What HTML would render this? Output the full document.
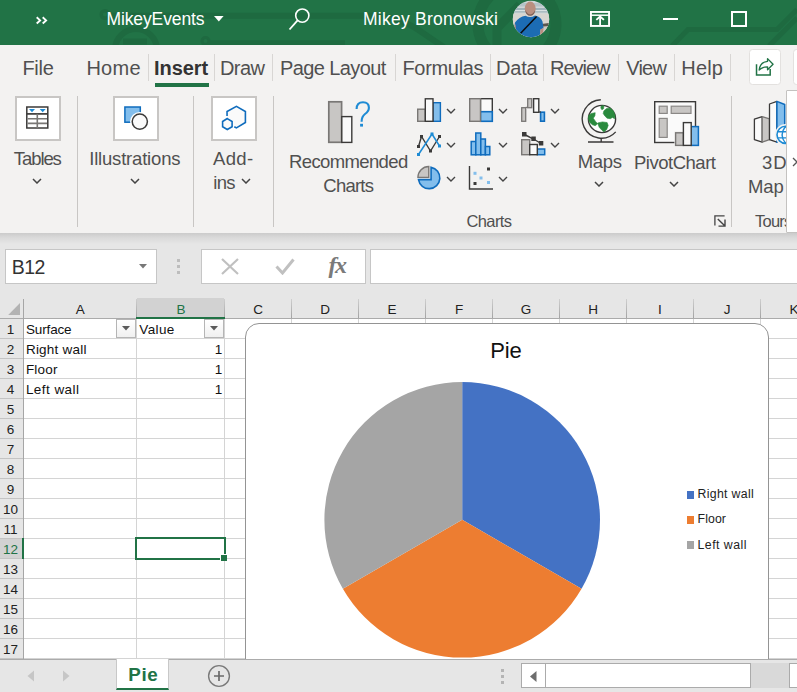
<!DOCTYPE html>
<html lang="en"><head><meta charset="utf-8"><title>MikeyEvents - Excel</title>
<style>
html,body{margin:0;padding:0;background:#fff;}
body{width:797px;height:692px;overflow:hidden;font-family:"Liberation Sans",sans-serif;}
#app{position:relative;width:797px;height:692px;overflow:hidden;background:#e6e6e6;}
#app div,#app svg{position:absolute;box-sizing:border-box;}
.t{white-space:pre;line-height:normal;}
#titlebar{left:0;top:0;width:797px;height:45px;background:#217346;overflow:hidden;}
#tabs{left:0;top:45px;width:797px;height:45px;background:#f3f2f1;}
#ribbon{left:0;top:90px;width:797px;height:143px;background:#f3f2f1;}
#shadow{left:0;top:233px;width:797px;height:11px;background:linear-gradient(#cbcbcb,#d9d9d9 40%,#e6e6e6);}
.sep{width:1px;background:#c8c6c4;}
.tsep{width:1px;top:54px;height:27px;background:#d8d6d4;}
.bigbtn{top:96px;width:46px;height:45px;background:#fff;border:2px solid #c8c6c4;}
.fbox{top:249px;height:35px;background:#fff;border:1px solid #c6c6c6;}
#grid{left:0;top:298px;width:797px;height:361px;background:#fff;overflow:hidden;}
#gridin{left:0;top:1px;width:797px;height:360px;}
.hl{left:0;width:797px;height:1px;background:#d4d4d4;}
.vl{top:0;width:1px;height:360px;background:#d4d4d4;}
#colhdr{left:0;top:-1px;width:797px;height:21px;background:#e6e6e6;border-bottom:1px solid #ababab;}
#rowhdr{left:0;top:20px;width:24px;height:340px;background:#e6e6e6;border-right:1px solid #a6a6a6;}
.rl{left:0;width:23px;height:1px;background:#c4c4c4;}
.cl{top:0;width:1px;height:19px;background:linear-gradient(#cfcfcf,#a3a3a3);}
.filt{width:20px;height:19px;background:linear-gradient(#fff,#f0f0f0);border:1px solid #b5b5b5;}
#chart{left:245px;top:24px;width:524px;height:400px;background:#fff;border:1px solid #949494;border-radius:14px;}
#tabbar{left:0;top:659px;width:797px;height:33px;background:#e6e6e6;}
#sheettab{left:116px;top:0;width:53px;height:31px;background:#fff;border-left:1px solid #c8c8c8;border-right:1px solid #c8c8c8;border-bottom:2px solid #217346;}

</style></head>
<body>
<div id="app">
<!-- ===== Title bar ===== -->
<div id="titlebar">
  <svg width="797" height="45" viewBox="0 0 797 45" style="left:0;top:0">
    <g fill="none" stroke="#1e6a40" stroke-width="4.5">
      <circle cx="105" cy="14.5" r="3.8" stroke-width="3.4"/>
      <path d="M108 15.8 H372 Q400 17 420 31 L445 48" stroke-width="6"/>
      <circle cx="136" cy="50" r="21" stroke-width="6"/>
      <path d="M123 41.5 H147" stroke-width="6"/>
      <circle cx="205.5" cy="41" r="3.5" stroke-width="3"/>
      <path d="M209 43 H345" stroke-width="5.5"/>
      <circle cx="517" cy="24" r="39" stroke-width="11"/>
      <path d="M497 45 L497 28 L520 5" stroke-width="9"/>
      <path d="M672 46 L688 29.5 H777 L797 9.5" stroke-width="5"/>
      <path d="M769 46 L797 18" stroke-width="5"/>
    </g>
  </svg>
  <!-- more chevrons -->
  <svg width="14" height="10" viewBox="0 0 14 10" style="left:35px;top:15px"><path d="M1.7 2.3 L5.1 5.4 L1.7 8.5 M7.7 2.3 L11.1 5.4 L7.7 8.5" fill="none" stroke="#fff" stroke-width="1.9"/></svg>
  <!-- dropdown -->
  <svg width="10" height="6" viewBox="0 0 10 6" style="left:214.2px;top:15.6px"><path d="M0 0 H9.6 L4.8 5.4 Z" fill="#fff"/></svg>
  <!-- search -->
  <svg width="24" height="26" viewBox="0 0 24 26" style="left:288px;top:6px"><circle cx="14.3" cy="9.6" r="6.6" fill="none" stroke="#fff" stroke-width="1.6"/><path d="M9.6 14.4 L1.5 23.5" stroke="#fff" stroke-width="1.8" fill="none"/></svg>
  <!-- avatar -->
  <svg width="38" height="38" viewBox="0 0 38 38" style="left:512px;top:0">
    <defs><clipPath id="av"><circle cx="19" cy="19" r="18.2"/></clipPath></defs>
    <g clip-path="url(#av)">
      <rect width="38" height="38" fill="#cfd6d8"/>
      <rect y="3" width="38" height="3.5" fill="#b4c3c8"/>
      <rect y="8" width="38" height="4.5" fill="#9fb3ba"/>
      <rect y="10" width="38" height="1.2" fill="#d9e0e2"/>
      <rect y="13.5" width="38" height="10" fill="#d8d5d0"/>
      <rect y="23" width="38" height="15" fill="#cdc8c0"/>
      <path d="M30 24 L37 23 L37 26 L31 26.5 Z" fill="#5a564e"/>
      <ellipse cx="18.2" cy="8.6" rx="5.5" ry="7" fill="#b98f80"/>
      <path d="M13.2 10 Q18.2 19 23.2 10 Q22.5 15.8 18.2 15.8 Q14 15.8 13.2 10 Z" fill="#7d5f55"/>
      <path d="M1.5 38 L3 22.5 Q7 17 13.5 15.8 Q18.2 18.5 23 15.6 Q28.5 16.8 30.5 21.5 L31.5 28 L28.5 29.5 L27.5 38 Z" fill="#1c6cb4"/>
      <path d="M24.6 16.4 L8.6 33.2" stroke="#0b0b0b" stroke-width="1.5"/>
      <path d="M28.5 29.5 L31.5 28 L31 34 L28 35 Z" fill="#b98f80"/>
      <path d="M2 27 L3.6 24 L4 31 L2.4 33 Z" fill="#b98f80"/>
    </g>
  </svg>
  <!-- ribbon display icon -->
  <svg width="22" height="18" viewBox="0 0 22 18" style="left:589px;top:10px"><rect x="1.95" y="1.95" width="18.1" height="14" fill="none" stroke="#fff" stroke-width="1.9"/><path d="M1 5.2 H21" stroke="#fff" stroke-width="1.5"/><path d="M11.1 16 V7" stroke="#fff" stroke-width="1.8"/><path d="M7.3 9.9 L11.1 6.6 L14.9 9.9" fill="none" stroke="#fff" stroke-width="1.9"/></svg>
  <!-- minimize -->
  <div style="left:662.5px;top:18px;width:15.5px;height:2px;background:#fff"></div>
  <!-- maximize -->
  <div style="left:731px;top:11px;width:16.2px;height:15.6px;border:2px solid #fff"></div>
</div>

<!-- ===== Tabs row ===== -->
<div id="tabs"></div>
<div class="tsep" style="left:148px"></div>
<div class="tsep" style="left:214px"></div>
<div class="tsep" style="left:272px"></div>
<div class="tsep" style="left:395px"></div>
<div class="tsep" style="left:490px"></div>
<div class="tsep" style="left:543px"></div>
<div class="tsep" style="left:618px"></div>
<div class="tsep" style="left:674px"></div>
<div class="tsep" style="left:730px"></div>
<div style="left:155px;top:82.5px;width:54px;height:4px;background:#217346"></div>
<div style="left:749px;top:49px;width:32px;height:36px;background:#fff;border:1px solid #e3e1df;border-radius:3.5px"></div>
<svg width="24" height="22" viewBox="0 0 24 22" style="left:752px;top:56px"><path d="M4.52 8.3 V19.04 H18.19 V13" fill="none" stroke="#217346" stroke-width="1.5"/><path d="M15.54 2.6 L21.05 8.17 L15.54 13.68 V10.8 Q10.5 10.8 7.17 14.03 Q8 6 15.54 5.3 Z" fill="none" stroke="#217346" stroke-width="1.35" stroke-linejoin="round"/></svg>
<div style="left:793px;top:49px;width:12px;height:36px;background:#fff;border:1px solid #e3e1df;border-radius:3.5px"></div>

<!-- ===== Ribbon ===== -->
<div id="ribbon"></div>
<div class="sep" style="left:77px;top:96px;height:131px"></div>
<div class="sep" style="left:193px;top:96px;height:131px"></div>
<div class="sep" style="left:273px;top:96px;height:131px"></div>
<div class="sep" style="left:731px;top:96px;height:131px"></div>
<div class="bigbtn" style="left:15px"></div>
<div class="bigbtn" style="left:113px"></div>
<div class="bigbtn" style="left:211px"></div>
<!-- Tables icon -->
<svg width="24" height="24" viewBox="0 0 24 24" style="left:25px;top:105px">
  <rect x="1.8" y="2" width="21" height="21" fill="#fff" stroke="#3b3a39" stroke-width="1.5"/>
  <path d="M1.8 8.9 H22.8" stroke="#3b3a39" stroke-width="1.7"/>
  <path d="M2.5 13.7 H22 M2.5 18.4 H22" stroke="#797775" stroke-width="1.6"/>
  <path d="M12.3 8.8 V23" stroke="#797775" stroke-width="1.6"/>
  <path d="M4 4 H10 L7 7.2 Z M14.7 4 H20.7 L17.7 7.2 Z" fill="#1e8bd4"/>
</svg>
<!-- Illustrations icon -->
<svg width="30" height="28" viewBox="0 0 30 28" style="left:121px;top:104px">
  <rect x="3.9" y="3" width="15.4" height="15.2" fill="#83beec" stroke="#0f6cbd" stroke-width="1.5"/>
  <circle cx="18.8" cy="17.6" r="9.7" fill="#fff"/>
  <circle cx="18.8" cy="17.6" r="7.6" fill="#fafafa" stroke="#3b3a39" stroke-width="1.5"/>
</svg>
<!-- Add-ins icon -->
<svg width="30" height="28" viewBox="0 0 30 28" style="left:220px;top:104px">
  <path d="M7.05 7.53 L16.42 2.3 L25.4 7.53 V18.47 L16.42 23.94 L7.05 18.47 Z" fill="#fafafa"/>
  <path d="M7.05 11.9 V7.53 L16.42 2.3 L25.4 7.53 V18.47 L16.42 23.94 L14.3 22.7" fill="none" stroke="#0f6cbd" stroke-width="1.6" stroke-linejoin="miter"/>
  <path d="M7.3 13.2 L13.3 16.8 V23.5 L7.3 27 L1.4 23.5 V16.8 Z" fill="#fff"/>
  <path d="M7.28 14.56 L12.1 17.53 V22.77 L7.28 25.5 L2.6 22.77 V17.53 Z" fill="#fafafa" stroke="#0f6cbd" stroke-width="1.6" stroke-linejoin="miter"/>
</svg>
<!-- Recommended charts -->
<svg width="46" height="46" viewBox="0 0 46 46" style="left:326px;top:99px">
  <rect x="2.8" y="2.8" width="12.8" height="40.5" fill="#c8c6c4" stroke="#797775" stroke-width="1.7"/>
  <rect x="15.8" y="17.6" width="10" height="25.8" fill="#fafafa" stroke="#3b3a39" stroke-width="1.4"/>
  <path d="M30.6 10 Q30.6 3.3 37 3.3 Q42.9 3.3 42.9 8.8 Q42.9 12.4 39 15 Q35.6 17.6 35.6 22.8" fill="none" stroke="#1e8bd4" stroke-width="2.1"/>
  <rect x="34.1" y="24.8" width="2.9" height="2.8" fill="#1e8bd4"/>
</svg>
<!-- column chart -->
<svg width="26" height="26" viewBox="0 0 26 26" style="left:416px;top:97px">
  <rect x="1.7" y="12.2" width="7.6" height="12.1" fill="#c8c6c4" stroke="#797775" stroke-width="1.4"/>
  <rect x="17" y="5.7" width="7.4" height="18.6" fill="#83beec" stroke="#0f6cbd" stroke-width="1.4"/>
  <rect x="9.3" y="1.8" width="7.7" height="22.5" fill="#fafafa" stroke="#3b3a39" stroke-width="1.4"/>
</svg>
<!-- treemap / hierarchy -->
<svg width="26" height="26" viewBox="0 0 26 26" style="left:468px;top:97px">
  <rect x="12.5" y="1.7" width="11.8" height="13" fill="#fafafa" stroke="#3b3a39" stroke-width="1.4"/>
  <rect x="12.5" y="14.7" width="11.8" height="9.6" fill="#83beec" stroke="#0f6cbd" stroke-width="1.6"/>
  <rect x="1.7" y="1.7" width="10.8" height="22.6" fill="#c8c6c4" stroke="#797775" stroke-width="1.4"/>
</svg>
<!-- waterfall -->
<svg width="26" height="26" viewBox="0 0 26 26" style="left:520px;top:97px">
  <rect x="1.7" y="10.7" width="4" height="13.6" fill="#c8c6c4" stroke="#797775" stroke-width="1.3"/>
  <rect x="7.7" y="1.7" width="4" height="9" fill="#c8c6c4" stroke="#797775" stroke-width="1.3"/>
  <path d="M5.7 10.4 H8" stroke="#797775" stroke-width="1.2"/>
  <rect x="13.6" y="1.7" width="5.2" height="13.6" fill="#fafafa" stroke="#3b3a39" stroke-width="1.4"/>
  <rect x="20.6" y="15.2" width="3.8" height="9" fill="#83beec" stroke="#0f6cbd" stroke-width="1.6"/>
  <path d="M18.8 15 H21" stroke="#3b3a39" stroke-width="1.2"/>
</svg>
<!-- line chart -->
<svg width="28" height="26" viewBox="0 0 28 26" style="left:415px;top:130.6px">
  <path d="M3.5 15.5 L6.5 5.5 L15.5 20 L24.5 5.5" fill="none" stroke="#3b3a39" stroke-width="1.4"/>
  <path d="M3.5 23.5 L17 3 L24.5 15" fill="none" stroke="#1e8bd4" stroke-width="1.5"/>
  <g fill="#3b3a39"><rect x="2" y="14" width="3" height="3"/><rect x="5" y="4" width="3" height="3"/><rect x="14" y="18.5" width="3" height="3"/><rect x="23" y="4" width="3" height="3"/></g>
  <g fill="#1e8bd4"><rect x="2" y="22" width="3" height="3"/><rect x="15.5" y="1.5" width="3" height="3"/><rect x="23" y="13.5" width="3" height="3"/></g>
</svg>
<!-- histogram -->
<svg width="24" height="28" viewBox="0 0 24 28" style="left:469px;top:130px">
  <g fill="#83beec" stroke="#0f6cbd" stroke-width="1.5">
    <rect x="2.2" y="11.5" width="4.6" height="13.3"/>
    <rect x="6.8" y="3" width="5" height="21.8"/>
    <rect x="11.8" y="9" width="4.6" height="15.8"/>
    <rect x="16.4" y="16.5" width="4.4" height="8.3"/>
  </g>
</svg>
<!-- combo chart -->
<svg width="28" height="26" viewBox="0 0 28 26" style="left:519px;top:130px">
  <path d="M5.5 4.5 L14.5 9 L22 13.5" fill="none" stroke="#3b3a39" stroke-width="1.4"/>
  <g fill="#3b3a39"><rect x="3" y="2" width="4.5" height="4.5"/><rect x="12.3" y="6.5" width="4.5" height="4.5"/><rect x="19.8" y="11" width="4.5" height="4.5"/></g>
  <rect x="2.7" y="9.7" width="8" height="15" fill="#c8c6c4" stroke="#797775" stroke-width="1.4"/>
  <rect x="18.3" y="19" width="7.4" height="5.7" fill="#83beec" stroke="#0f6cbd" stroke-width="1.5"/>
  <rect x="10.7" y="14.5" width="7.6" height="10.2" fill="#fafafa" stroke="#3b3a39" stroke-width="1.4"/>
</svg>
<!-- pie -->
<svg width="28" height="28" viewBox="0 0 28 28" style="left:415px;top:164px">
  <path d="M16.08 3.34 A10.75 10.75 0 1 1 3.48 15.66 L16.08 15.66 Z" fill="#83beec" stroke="#0f6cbd" stroke-width="1.6" stroke-linejoin="miter"/>
  <path d="M13.78 13.35 L13.78 2.5 A10.85 10.85 0 0 0 2.93 13.35 Z" fill="#c8c6c4" stroke="#797775" stroke-width="1.4" stroke-linejoin="miter"/>
</svg>
<!-- scatter -->
<svg width="28" height="28" viewBox="0 0 28 28" style="left:467px;top:164px">
  <path d="M2.5 2 V25 H26" fill="none" stroke="#3b3a39" stroke-width="1.4"/>
  <g fill="#83beec"><rect x="6.5" y="7.8" width="3" height="3"/><rect x="12.5" y="12.5" width="3" height="3"/><rect x="20" y="17" width="3" height="3"/></g>
  <g fill="#3b3a39"><rect x="6.5" y="18" width="3" height="3"/><rect x="20" y="3.5" width="3" height="3"/></g>
</svg>
<!-- Maps globe -->
<svg width="44" height="48" viewBox="0 0 44 48" style="left:580px;top:97px">
  <circle cx="22" cy="22" r="13.6" fill="#fff" stroke="#3b3a39" stroke-width="1.4"/>
  <path d="M8.5 18.8 L11.2 16.5 L15.2 15.7 L14.9 18.8 L13.3 21.2 L15.5 24.4 L17.6 26.8 L15.2 28.7 L12 27.6 L9.6 25.2 L8.4 22 Z M21.2 9 L23.9 8.5 L23.6 11.7 L21.9 12.8 L20.8 10.9 Z M23.9 13.8 L26.7 11.4 L30.3 10.9 L33.5 14.1 L35.1 18.8 L34.6 21.7 L32.4 20.4 L30.3 21.7 L27.1 21.2 L24.7 18.8 L23.2 16.5 Z M17.6 26 L22.4 24.9 L27.1 25.5 L28.2 28.4 L26.7 32.4 L23.9 35.1 L21.9 33.2 L19.2 30.3 Z" fill="#2a8a3e" stroke="#2a8a3e" stroke-width="0.6" stroke-linejoin="round"/>
  <path d="M20.8 2.81 A19.2 19.2 0 1 0 35.72 34.9" fill="none" stroke="#3b3a39" stroke-width="1.4"/>
  <path d="M21.2 41 V45 M8 45 H33.5" fill="none" stroke="#3b3a39" stroke-width="1.4"/>
</svg>
<!-- PivotChart -->
<svg width="48" height="48" viewBox="0 0 48 48" style="left:652px;top:99px">
  <rect x="2.7" y="2.7" width="40.8" height="40.8" fill="#fafafa" stroke="#3b3a39" stroke-width="1.4"/>
  <g fill="#c8c6c4" stroke="#8a8886" stroke-width="1.2">
    <rect x="7.2" y="7.2" width="8" height="7.2"/><rect x="19.2" y="7.2" width="19.8" height="7.2"/><rect x="7.2" y="19.4" width="8" height="19"/>
  </g>
  <rect x="22.4" y="32" width="11" height="15" fill="#f3f2f1"/>
  <rect x="23.6" y="33.8" width="7.8" height="12.6" fill="#c8c6c4" stroke="#797775" stroke-width="1.4"/>
  <rect x="39.2" y="27.6" width="7.2" height="18.8" fill="#83beec" stroke="#0f6cbd" stroke-width="1.5"/>
  <rect x="31.4" y="23.6" width="7.8" height="22.8" fill="#fafafa" stroke="#3b3a39" stroke-width="1.4"/>
</svg>
<!-- 3D map -->
<svg width="44" height="48" viewBox="0 0 44 48" style="left:752px;top:98px">
  <path d="M2.4 21.2 L10.2 18.6 V44.2 L2.4 41.6 Z" fill="#fafafa" stroke="#3b3a39" stroke-width="1.3" stroke-linejoin="round"/>
  <path d="M10.2 18.6 L17.5 20.8 V41.6 L10.2 44.2 Z" fill="#c8c6c4" stroke="#797775" stroke-width="1.3" stroke-linejoin="round"/>
  <path d="M17.5 6 L24.9 3.4 V44.2 L17.5 41.6 Z" fill="#fafafa" stroke="#3b3a39" stroke-width="1.3" stroke-linejoin="round"/>
  <path d="M24.9 3.4 L32.7 6.5 V40 L24.9 44.2 Z" fill="#83beec" stroke="#0f6cbd" stroke-width="1.5" stroke-linejoin="round"/>
  <circle cx="33.6" cy="36.8" r="10.8" fill="#f3f2f1"/>
  <circle cx="33.6" cy="36.8" r="8.6" fill="#fff" stroke="#1e8bd4" stroke-width="1.6"/>
  <path d="M25.6 33.8 H41.6 M25.6 39.9 H41.6 M33.6 28.2 Q26.6 36.8 33.6 45.4 M33.6 28.2 Q40.6 36.8 33.6 45.4" fill="none" stroke="#1e8bd4" stroke-width="1.4"/>
</svg>
<!-- dialog launcher -->
<svg width="15" height="15" viewBox="0 0 15 15" style="left:713px;top:214px"><path d="M1.9 11.4 V1.9 H11.6" fill="none" stroke="#444" stroke-width="1.3"/><path d="M4.8 4.9 L12 12.1 M12 5.6 V12.1 H5.5" fill="none" stroke="#444" stroke-width="1.4"/></svg>
<!-- chevrons -->
<svg class="chv" width="10" height="6" viewBox="0 0 10 6" style="left:32px;top:178px"><path d="M1 1 L5 5 L9 1" fill="none" stroke="#444" stroke-width="1.5"/></svg>
<svg class="chv" width="10" height="6" viewBox="0 0 10 6" style="left:130px;top:178px"><path d="M1 1 L5 5 L9 1" fill="none" stroke="#444" stroke-width="1.5"/></svg>
<svg class="chv" width="10" height="6" viewBox="0 0 10 6" style="left:241.2px;top:178px"><path d="M1 1 L5 5 L9 1" fill="none" stroke="#444" stroke-width="1.5"/></svg>
<svg class="chv" width="10" height="6" viewBox="0 0 10 6" style="left:594.2px;top:181.4px"><path d="M1 1 L5 5 L9 1" fill="none" stroke="#444" stroke-width="1.5"/></svg>
<svg class="chv" width="10" height="6" viewBox="0 0 10 6" style="left:669.2px;top:181.4px"><path d="M1 1 L5 5 L9 1" fill="none" stroke="#444" stroke-width="1.5"/></svg>
<svg class="chv" width="10" height="6" viewBox="0 0 10 6" style="left:446.2px;top:108px"><path d="M1 1 L5 5 L9 1" fill="none" stroke="#444" stroke-width="1.4"/></svg>
<svg class="chv" width="10" height="6" viewBox="0 0 10 6" style="left:498.2px;top:108px"><path d="M1 1 L5 5 L9 1" fill="none" stroke="#444" stroke-width="1.4"/></svg>
<svg class="chv" width="10" height="6" viewBox="0 0 10 6" style="left:550.2px;top:108px"><path d="M1 1 L5 5 L9 1" fill="none" stroke="#444" stroke-width="1.4"/></svg>
<svg class="chv" width="10" height="6" viewBox="0 0 10 6" style="left:446.2px;top:142px"><path d="M1 1 L5 5 L9 1" fill="none" stroke="#444" stroke-width="1.4"/></svg>
<svg class="chv" width="10" height="6" viewBox="0 0 10 6" style="left:498.2px;top:142px"><path d="M1 1 L5 5 L9 1" fill="none" stroke="#444" stroke-width="1.4"/></svg>
<svg class="chv" width="10" height="6" viewBox="0 0 10 6" style="left:550.2px;top:142px"><path d="M1 1 L5 5 L9 1" fill="none" stroke="#444" stroke-width="1.4"/></svg>
<svg class="chv" width="10" height="6" viewBox="0 0 10 6" style="left:446.2px;top:175.8px"><path d="M1 1 L5 5 L9 1" fill="none" stroke="#444" stroke-width="1.4"/></svg>
<svg class="chv" width="10" height="6" viewBox="0 0 10 6" style="left:498.2px;top:175.8px"><path d="M1 1 L5 5 L9 1" fill="none" stroke="#444" stroke-width="1.4"/></svg>
<!-- ribbon scroll panel -->
<div style="left:786px;top:90px;width:20px;height:143px;background:#fff;border:1px solid #c4c2c0;border-radius:1px 0 0 1px;z-index:3"></div>
<svg width="6" height="10" viewBox="0 0 6 10" style="left:792px;top:157px;z-index:4"><path d="M1 1 L5 5 L1 9" fill="none" stroke="#555" stroke-width="1.3"/></svg>

<div id="shadow"></div>

<!-- ===== Formula bar ===== -->
<div class="fbox" style="left:5px;width:152px"></div>
<svg width="8" height="5" viewBox="0 0 8 5" style="left:138.5px;top:264px"><path d="M0 0 H8 L4 4.5 Z" fill="#777"/></svg>
<div style="left:177px;top:259px;width:3px;height:3px;background:#bdbdbd"></div>
<div style="left:177px;top:265px;width:3px;height:3px;background:#bdbdbd"></div>
<div style="left:177px;top:271px;width:3px;height:3px;background:#bdbdbd"></div>
<div class="fbox" style="left:201px;width:165px"></div>
<svg width="18" height="17" viewBox="0 0 18 17" style="left:221px;top:258px"><path d="M1 1 L17 16 M17 1 L1 16" stroke="#c0c0c0" stroke-width="2.2" fill="none"/></svg>
<svg width="20" height="17" viewBox="0 0 20 17" style="left:274.5px;top:258px"><path d="M1.5 8.5 L7.5 15 L18.5 1.5" stroke="#c0c0c0" stroke-width="3" fill="none"/></svg>
<div class="fbox" style="left:370px;width:440px"></div>

<!-- ===== Grid ===== -->
<div id="grid"><div id="gridin">
<div class="hl" style="top:39px"></div>
<div class="hl" style="top:59px"></div>
<div class="hl" style="top:79px"></div>
<div class="hl" style="top:99px"></div>
<div class="hl" style="top:119px"></div>
<div class="hl" style="top:139px"></div>
<div class="hl" style="top:159px"></div>
<div class="hl" style="top:179px"></div>
<div class="hl" style="top:199px"></div>
<div class="hl" style="top:219px"></div>
<div class="hl" style="top:239px"></div>
<div class="hl" style="top:259px"></div>
<div class="hl" style="top:279px"></div>
<div class="hl" style="top:299px"></div>
<div class="hl" style="top:319px"></div>
<div class="hl" style="top:339px"></div>
<div class="hl" style="top:359px"></div>
<div class="vl" style="left:136px;top:19px"></div>
<div class="vl" style="left:224px;top:19px"></div>
<div class="vl" style="left:291px;top:19px"></div>
<div class="vl" style="left:358px;top:19px"></div>
<div class="vl" style="left:425px;top:19px"></div>
<div class="vl" style="left:492px;top:19px"></div>
<div class="vl" style="left:559px;top:19px"></div>
<div class="vl" style="left:626px;top:19px"></div>
<div class="vl" style="left:693px;top:19px"></div>
<div class="vl" style="left:760px;top:19px"></div>
<div id="chart">
  <svg width="522" height="398" viewBox="0 0 522 398" style="left:0;top:0">
    <!-- pie: center (462.1,519.8) abs -> rel to chart inner (246,324): (216.1,195.8) r=137.8 -->
    <g transform="translate(216.2,195.8)">
      <path d="M0 0 L0 -137.8 A137.8 137.8 0 0 1 119.34 68.9 Z" fill="#4472c4"/>
      <path d="M0 0 L119.34 68.9 A137.8 137.8 0 0 1 -119.34 68.9 Z" fill="#ed7d31"/>
      <path d="M0 0 L-119.34 68.9 A137.8 137.8 0 0 1 0 -137.8 Z" fill="#a5a5a5"/>
    </g>
    <rect x="441" y="167" width="7" height="8" fill="#4472c4"/>
    <rect x="441" y="192" width="7" height="8" fill="#ed7d31"/>
    <rect x="441" y="217" width="7" height="8" fill="#a5a5a5"/>
  </svg>
</div>

<div id="colhdr"></div>
<div class="cl" style="left:136px"></div>
<div class="cl" style="left:224px"></div>
<div class="cl" style="left:291px"></div>
<div class="cl" style="left:358px"></div>
<div class="cl" style="left:425px"></div>
<div class="cl" style="left:492px"></div>
<div class="cl" style="left:559px"></div>
<div class="cl" style="left:626px"></div>
<div class="cl" style="left:693px"></div>
<div class="cl" style="left:760px"></div>
<div class="cl" style="left:23px;top:0;height:20px;background:#a6a6a6"></div>
<div style="left:137px;top:-1px;width:87px;height:21px;background:#d2d2d2"></div>
<div style="left:136px;top:18px;width:89px;height:2px;background:#217346"></div>
<svg width="12" height="12" viewBox="0 0 12 12" style="left:8.2px;top:4px"><path d="M12 0 V12 H0.2 Z" fill="#b3b3b3"/></svg>
<div id="rowhdr"></div>
<div class="rl" style="top:39px"></div>
<div class="rl" style="top:59px"></div>
<div class="rl" style="top:79px"></div>
<div class="rl" style="top:99px"></div>
<div class="rl" style="top:119px"></div>
<div class="rl" style="top:139px"></div>
<div class="rl" style="top:159px"></div>
<div class="rl" style="top:179px"></div>
<div class="rl" style="top:199px"></div>
<div class="rl" style="top:219px"></div>
<div class="rl" style="top:239px"></div>
<div class="rl" style="top:259px"></div>
<div class="rl" style="top:279px"></div>
<div class="rl" style="top:299px"></div>
<div class="rl" style="top:319px"></div>
<div class="rl" style="top:339px"></div>
<div class="rl" style="top:359px"></div>
<div style="left:0;top:240px;width:23px;height:19px;background:#d2d2d2"></div>
<div style="left:22px;top:239px;width:2px;height:21px;background:#217346"></div>
<div class="filt" style="left:116px;top:20px"></div>
<svg width="8" height="5" viewBox="0 0 8 5" style="left:122.2px;top:27.2px"><path d="M0 0 H8 L4 4.6 Z" fill="#5a5a5a"/></svg>
<div class="filt" style="left:204px;top:20px"></div>
<svg width="8" height="5" viewBox="0 0 8 5" style="left:210.2px;top:27.2px"><path d="M0 0 H8 L4 4.6 Z" fill="#5a5a5a"/></svg>
<div style="left:135px;top:238px;width:91px;height:23px;border:2px solid #217346"></div>
<div style="left:220px;top:255px;width:7px;height:7px;background:#217346;border-left:1px solid #fff;border-top:1px solid #fff"></div>
</div></div>

<!-- ===== Sheet tab bar ===== -->
<div id="tabbar">
  <div style="left:0;top:0;width:797px;height:1px;background:#ababab"></div>
  <svg width="8" height="12" viewBox="0 0 8 12" style="left:26.5px;top:11px"><path d="M7 0.5 V11.5 L0.5 6 Z" fill="#c6c6c6"/></svg>
  <svg width="8" height="12" viewBox="0 0 8 12" style="left:61.5px;top:11px"><path d="M1 0.5 V11.5 L7.5 6 Z" fill="#c6c6c6"/></svg>
  <div id="sheettab"></div>
  <svg width="24" height="24" viewBox="0 0 24 24" style="left:207px;top:5px"><circle cx="12" cy="12" r="10.4" fill="none" stroke="#7a7a7a" stroke-width="1.4"/><path d="M7 12 H17 M12 7 V17" stroke="#6a6a6a" stroke-width="1.7"/></svg>
  <div style="left:501px;top:10px;width:3px;height:3px;background:#b4b4b4"></div>
  <div style="left:501px;top:16px;width:3px;height:3px;background:#b4b4b4"></div>
  <div style="left:501px;top:22px;width:3px;height:3px;background:#b4b4b4"></div>
  <div style="left:521px;top:4px;width:25px;height:25px;background:#fff;border:1px solid #ababab"></div>
  <svg width="7" height="11" viewBox="0 0 7 11" style="left:529.5px;top:11.5px"><path d="M6.5 0 V11 L0 5.5 Z" fill="#6d6d6d"/></svg>
  <div style="left:545px;top:4px;width:206px;height:25px;background:#fff;border:1px solid #ababab"></div>
  <div style="left:751px;top:4px;width:39px;height:25px;background:#d9d9d9"></div>
  <div style="left:789px;top:4px;width:20px;height:25px;background:#fff;border:1px solid #ababab"></div>
</div>

<!-- text labels -->
<div class="t" style="left:106.49px;top:9.0px;font-size:17.5px;color:#fff;letter-spacing:-0.112px;">MikeyEvents</div>
<div class="t" style="left:363.01px;top:9.0px;font-size:17.5px;color:#fff;letter-spacing:0.257px;">Mikey Bronowski</div>
<div class="t" style="left:22.44px;top:57.0px;font-size:20px;color:#505050;letter-spacing:-0.290px;">File</div>
<div class="t" style="left:86.44px;top:57.0px;font-size:20px;color:#505050;letter-spacing:0.242px;">Home</div>
<div class="t" style="left:219.92px;top:57.0px;font-size:20px;color:#505050;letter-spacing:-0.514px;">Draw</div>
<div class="t" style="left:279.99px;top:57.0px;font-size:20px;color:#505050;letter-spacing:-0.594px;">Page Layout</div>
<div class="t" style="left:402.44px;top:57.0px;font-size:20px;color:#505050;letter-spacing:-0.316px;">Formulas</div>
<div class="t" style="left:496.04px;top:57.0px;font-size:20px;color:#505050;letter-spacing:-0.220px;">Data</div>
<div class="t" style="left:549.99px;top:57.0px;font-size:20px;color:#505050;letter-spacing:-1.001px;">Review</div>
<div class="t" style="left:626.26px;top:57.0px;font-size:20px;color:#505050;letter-spacing:-0.792px;">View</div>
<div class="t" style="left:681.25px;top:57.0px;font-size:20px;color:#505050;letter-spacing:0.201px;">Help</div>
<div class="t" style="left:154.01px;top:57.0px;font-size:20px;color:#333;font-weight:700;letter-spacing:-0.037px;">Insert</div>
<div class="t" style="left:13.83px;top:148.0px;font-size:18.5px;color:#505050;letter-spacing:-1.088px;">Tables</div>
<div class="t" style="left:89.21px;top:148.0px;font-size:18.5px;color:#505050;letter-spacing:-0.190px;">Illustrations</div>
<div class="t" style="left:213.04px;top:148.0px;font-size:18.5px;color:#505050;letter-spacing:0.320px;">Add-</div>
<div class="t" style="left:213.29px;top:172.0px;font-size:18.5px;color:#505050;letter-spacing:-0.716px;">ins</div>
<div class="t" style="left:289.04px;top:151.0px;font-size:18.5px;color:#505050;letter-spacing:-0.628px;">Recommended</div>
<div class="t" style="left:323.35px;top:174.6px;font-size:18.5px;color:#505050;letter-spacing:-0.791px;">Charts</div>
<div class="t" style="left:577.76px;top:151.0px;font-size:18.5px;color:#505050;letter-spacing:-0.335px;">Maps</div>
<div class="t" style="left:634.00px;top:152.0px;font-size:18.5px;color:#505050;letter-spacing:-0.490px;">PivotChart</div>
<div class="t" style="left:762.10px;top:152.0px;font-size:18.5px;color:#505050;letter-spacing:0.857px;">3D</div>
<div class="t" style="left:748.00px;top:175.5px;font-size:18.5px;color:#505050;letter-spacing:-0.129px;">Map</div>
<div class="t" style="left:466.42px;top:212.3px;font-size:16.5px;color:#505050;letter-spacing:-0.596px;">Charts</div>
<div class="t" style="left:755.10px;top:212.3px;font-size:16.5px;color:#505050;letter-spacing:-0.783px;">Tours</div>
<div class="t" style="left:11.74px;top:256.0px;font-size:19.5px;color:#333;letter-spacing:-0.531px;">B12</div>
<div class="t" style="left:328.55px;top:251.7px;font-size:24px;color:#7a7a7a;font-weight:700;font-family:'Liberation Serif',serif;font-style:italic;letter-spacing:-1.545px;">fx</div>
<div class="t" style="left:242.0px;width:32.0px;text-align:center;top:301.6px;font-size:13.5px;color:#222;">C</div>
<div class="t" style="left:309.0px;width:32.0px;text-align:center;top:301.6px;font-size:13.5px;color:#222;">D</div>
<div class="t" style="left:376.0px;width:32.0px;text-align:center;top:301.6px;font-size:13.5px;color:#222;">E</div>
<div class="t" style="left:443.0px;width:32.0px;text-align:center;top:301.6px;font-size:13.5px;color:#222;">F</div>
<div class="t" style="left:510.0px;width:32.0px;text-align:center;top:301.6px;font-size:13.5px;color:#222;">G</div>
<div class="t" style="left:577.0px;width:32.0px;text-align:center;top:301.6px;font-size:13.5px;color:#222;">H</div>
<div class="t" style="left:644.0px;width:32.0px;text-align:center;top:301.6px;font-size:13.5px;color:#222;">I</div>
<div class="t" style="left:711.0px;width:32.0px;text-align:center;top:301.6px;font-size:13.5px;color:#222;">J</div>
<div class="t" style="left:778.0px;width:32.0px;text-align:center;top:301.6px;font-size:13.5px;color:#222;">K</div>
<div class="t" style="left:64.3px;width:32.0px;text-align:center;top:301.6px;font-size:13.5px;color:#222;">A</div>
<div class="t" style="left:165.0px;width:32.0px;text-align:center;top:301.6px;font-size:13.5px;color:#217346;">B</div>
<div class="t" style="left:-9.5px;width:40.0px;text-align:center;top:321.5px;font-size:13.5px;color:#222;">1</div>
<div class="t" style="left:-9.5px;width:40.0px;text-align:center;top:341.5px;font-size:13.5px;color:#222;">2</div>
<div class="t" style="left:-9.5px;width:40.0px;text-align:center;top:361.5px;font-size:13.5px;color:#222;">3</div>
<div class="t" style="left:-9.5px;width:40.0px;text-align:center;top:381.5px;font-size:13.5px;color:#222;">4</div>
<div class="t" style="left:-9.5px;width:40.0px;text-align:center;top:401.5px;font-size:13.5px;color:#222;">5</div>
<div class="t" style="left:-9.5px;width:40.0px;text-align:center;top:421.5px;font-size:13.5px;color:#222;">6</div>
<div class="t" style="left:-9.5px;width:40.0px;text-align:center;top:441.5px;font-size:13.5px;color:#222;">7</div>
<div class="t" style="left:-9.5px;width:40.0px;text-align:center;top:461.5px;font-size:13.5px;color:#222;">8</div>
<div class="t" style="left:-9.5px;width:40.0px;text-align:center;top:481.5px;font-size:13.5px;color:#222;">9</div>
<div class="t" style="left:-9.5px;width:40.0px;text-align:center;top:501.5px;font-size:13.5px;color:#222;">10</div>
<div class="t" style="left:-9.5px;width:40.0px;text-align:center;top:521.5px;font-size:13.5px;color:#222;">11</div>
<div class="t" style="left:-9.5px;width:40.0px;text-align:center;top:541.5px;font-size:13.5px;color:#217346;">12</div>
<div class="t" style="left:-9.5px;width:40.0px;text-align:center;top:561.5px;font-size:13.5px;color:#222;">13</div>
<div class="t" style="left:-9.5px;width:40.0px;text-align:center;top:581.5px;font-size:13.5px;color:#222;">14</div>
<div class="t" style="left:-9.5px;width:40.0px;text-align:center;top:601.5px;font-size:13.5px;color:#222;">15</div>
<div class="t" style="left:-9.5px;width:40.0px;text-align:center;top:621.5px;font-size:13.5px;color:#222;">16</div>
<div class="t" style="left:-9.5px;width:40.0px;text-align:center;top:641.5px;font-size:13.5px;color:#222;">17</div>
<div class="t" style="left:25.92px;top:321.5px;font-size:13.5px;color:#111;letter-spacing:-0.135px;">Surface</div>
<div class="t" style="left:25.91px;top:341.5px;font-size:13.5px;color:#111;letter-spacing:0.229px;">Right wall</div>
<div class="t" style="left:25.91px;top:361.5px;font-size:13.5px;color:#111;letter-spacing:0.193px;">Floor</div>
<div class="t" style="left:25.91px;top:381.5px;font-size:13.5px;color:#111;letter-spacing:0.441px;">Left wall</div>
<div class="t" style="left:139.28px;top:321.5px;font-size:13.5px;color:#111;letter-spacing:0.372px;">Value</div>
<div class="t" style="left:203.5px;width:30.2px;text-align:center;top:341.5px;font-size:13.5px;color:#111;">1</div>
<div class="t" style="left:203.5px;width:30.2px;text-align:center;top:361.5px;font-size:13.5px;color:#111;">1</div>
<div class="t" style="left:203.5px;width:30.2px;text-align:center;top:381.5px;font-size:13.5px;color:#111;">1</div>
<div class="t" style="left:490.23px;top:337.6px;font-size:22px;color:#111;letter-spacing:-0.143px;">Pie</div>
<div class="t" style="left:697.55px;top:486.5px;font-size:12.3px;color:#222;letter-spacing:0.321px;">Right wall</div>
<div class="t" style="left:697.55px;top:512.2px;font-size:12.3px;color:#222;letter-spacing:0.095px;">Floor</div>
<div class="t" style="left:697.55px;top:537.5px;font-size:12.3px;color:#222;letter-spacing:0.468px;">Left wall</div>
<div class="t" style="left:128.27px;top:663.5px;font-size:18.8px;color:#217346;font-weight:700;letter-spacing:0.635px;">Pie</div>
</div>
</body></html>
